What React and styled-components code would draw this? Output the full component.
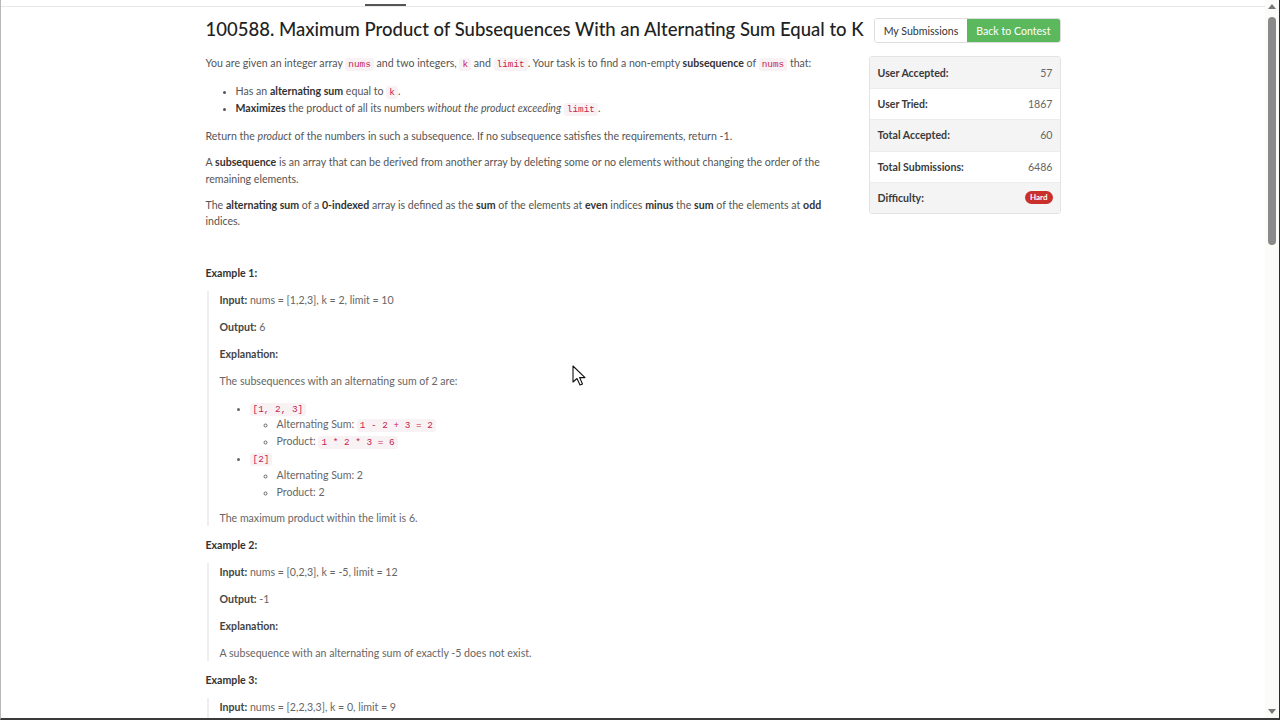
import React from "react";
import styled, { createGlobalStyle } from "styled-components";

const GlobalStyle = createGlobalStyle`
  html, body {
    margin: 0;
    padding: 0;
    background: #fff;
    overflow: hidden;
  }
`;

const font = `"Lato", "Liberation Sans", sans-serif`;
const mono = `"Liberation Mono", "DejaVu Sans Mono", monospace`;

const Frame = styled.div`
  width: 1280px;
  height: 720px;
  box-sizing: border-box;
  display: flex;
  border-left: 1px solid #b8b8b8;
  border-right: 1px solid #2a2a2a;
  border-bottom: 2px solid #3a3a3a;
  font-family: ${font};
  position: relative;
  overflow: hidden;
`;

const Page = styled.div`
  flex: 1;
  display: flex;
  flex-direction: column;
  overflow: hidden;
`;

const Container = styled.div`
  width: 855px;
  margin: 0 auto;
`;

const TopNav = styled.div`
  height: 6px;
  border-bottom: 1px solid #e8e8e8;
`;

const NavTab = styled.div`
  width: 41px;
  height: 4px;
  margin-left: 159px;
  border-bottom: 2px solid #555;
`;

const Main = styled(Container)`
  display: flex;
  justify-content: space-between;
  padding-top: 9px;
`;

const Content = styled.div`
  width: 652px;
  font-size: 10.6px;
  line-height: 16.5px;
  color: #555;

  p {
    margin: 0 0 9.5px;
  }
  b, strong {
    color: #333;
  }
`;

const Title = styled.h1`
  margin: 0 0 13px;
  font-size: 18.5px;
  line-height: 26px;
  font-weight: 500;
  color: #222;
  white-space: nowrap;
`;

const Code = styled.code`
  font-family: ${mono};
  font-size: 9.4px;
  line-height: 1;
  color: #c7254e;
  background: #f9f2f4;
  padding: 1px 3px;
  border-radius: 3px;
`;

const Bullets = styled.ul`
  margin: ${(p) => (p.$nested ? "0" : "11.5px 0")};
  padding-left: ${(p) => p.$indent || 30}px;
  list-style: ${(p) => (p.$circle ? "circle" : "disc")};

  li {
    line-height: 16.8px;
  }
`;

const Spacer = styled.div`
  height: 26px;
`;

const ExampleTitle = styled.p`
  font-weight: 700;
  color: #333;
`;

const ExampleBlock = styled.div`
  border-left: 2px solid #eee;
  padding: 1px 0 0 11px;
  margin: 0 0 10.5px 1px;
  color: #666;

  && p {
    margin-bottom: 10.5px;
  }
  && p:last-child {
    margin-bottom: 0;
  }
  && > ul {
    margin: -0.5px 0 9.5px;
  }
  strong {
    color: #444;
  }
`;

const Sidebar = styled.div`
  width: 192px;
  display: flex;
  flex-direction: column;
  align-items: flex-end;
  padding-top: 2px;
`;

const ButtonGroup = styled.div`
  display: flex;
  border: 1px solid #ddd;
  border-radius: 3px;
  overflow: hidden;
`;

const Button = styled.div`
  height: 23px;
  display: flex;
  align-items: center;
  padding: 0 ${(p) => p.$pad}px;
  font-size: 10.6px;
  color: ${(p) => (p.$primary ? "#fff" : "#333")};
  background: ${(p) => (p.$primary ? "#5cb85c" : "#fff")};
`;

const Stats = styled.div`
  width: 192px;
  margin-top: 13px;
  border: 1px solid #e3e3e3;
  border-radius: 3px;
  box-sizing: border-box;
  overflow: hidden;
`;

const StatRow = styled.div`
  height: 31.2px;
  box-sizing: border-box;
  display: flex;
  align-items: center;
  justify-content: space-between;
  padding: 0 7px 0 8px;
  background: ${(p) => (p.$odd ? "#f4f4f5" : "#fff")};
  border-top: ${(p) => (p.$first ? "none" : "1px solid #ececec")};
  font-size: 10.6px;
`;

const StatLabel = styled.span`
  font-weight: 700;
  color: #3a3a3a;
`;

const StatValue = styled.span`
  color: #666;
`;

const Badge = styled.span`
  background: #c9302c;
  color: #fff;
  font-size: 8px;
  font-weight: 700;
  padding: 1px 5px;
  border-radius: 7px;
  line-height: 11px;
`;

const Scrollbar = styled.div`
  width: 14px;
  background: #fbfbf8;
  display: flex;
  flex-direction: column;
  align-items: center;
  padding-top: 4px;
  box-sizing: border-box;
`;

const Thumb = styled.div`
  width: 8px;
  height: 228px;
  margin-top: 8px;
  border-radius: 4px;
  background: #8a8a8a;
`;

const Arrow = styled.div`
  width: 0;
  height: 0;
  border-left: 4px solid transparent;
  border-right: 4px solid transparent;
  ${(p) => (p.$down ? "border-top: 5px solid #777;" : "border-bottom: 5px solid #777;")}
  margin-top: ${(p) => (p.$down ? "auto" : "0")};
  margin-bottom: ${(p) => (p.$down ? "4px" : "0")};
`;

const Cursor = styled.svg`
  position: absolute;
  left: 571px;
  top: 365px;
`;

const stats = [
  ["User Accepted:", "57"],
  ["User Tried:", "1867"],
  ["Total Accepted:", "60"],
  ["Total Submissions:", "6486"],
];

export default function App() {
  return (
    <>
      <GlobalStyle />
      <Frame>
        <Page>
          <TopNav>
            <Container>
              <NavTab />
            </Container>
          </TopNav>
          <Main>
            <Content>
              <Title>100588. Maximum Product of Subsequences With an Alternating Sum Equal to K</Title>
              <p>
                You are given an integer array <Code>nums</Code> and two integers, <Code>k</Code> and{" "}
                <Code>limit</Code>. Your task is to find a non-empty <strong>subsequence</strong> of{" "}
                <Code>nums</Code> that:
              </p>
              <Bullets>
                <li>
                  Has an <strong>alternating sum</strong> equal to <Code>k</Code>.
                </li>
                <li>
                  <strong>Maximizes</strong> the product of all its numbers{" "}
                  <em>without the product exceeding</em> <Code>limit</Code>.
                </li>
              </Bullets>
              <p>
                Return the <em>product</em> of the numbers in such a subsequence. If no subsequence satisfies the
                requirements, return -1.
              </p>
              <p>
                A <strong>subsequence</strong> is an array that can be derived from another array by deleting some or
                no elements without changing the order of the remaining elements.
              </p>
              <p>
                The <strong>alternating sum</strong> of a <strong>0-indexed</strong> array is defined as the{" "}
                <strong>sum</strong> of the elements at <strong>even</strong> indices <strong>minus</strong> the{" "}
                <strong>sum</strong> of the elements at <strong>odd</strong> indices.
              </p>
              <Spacer />

              <ExampleTitle>Example 1:</ExampleTitle>
              <ExampleBlock>
                <p>
                  <strong>Input:</strong> nums = [1,2,3], k = 2, limit = 10
                </p>
                <p>
                  <strong>Output:</strong> 6
                </p>
                <p>
                  <strong>Explanation:</strong>
                </p>
                <p>The subsequences with an alternating sum of 2 are:</p>
                <Bullets $indent={30}>
                  <li>
                    <Code>[1, 2, 3]</Code>
                    <Bullets $circle $nested $indent={27}>
                      <li>
                        Alternating Sum: <Code>1 - 2 + 3 = 2</Code>
                      </li>
                      <li>
                        Product: <Code>1 * 2 * 3 = 6</Code>
                      </li>
                    </Bullets>
                  </li>
                  <li>
                    <Code>[2]</Code>
                    <Bullets $circle $nested $indent={27}>
                      <li>Alternating Sum: 2</li>
                      <li>Product: 2</li>
                    </Bullets>
                  </li>
                </Bullets>
                <p>The maximum product within the limit is 6.</p>
              </ExampleBlock>

              <ExampleTitle>Example 2:</ExampleTitle>
              <ExampleBlock>
                <p>
                  <strong>Input:</strong> nums = [0,2,3], k = -5, limit = 12
                </p>
                <p>
                  <strong>Output:</strong> -1
                </p>
                <p>
                  <strong>Explanation:</strong>
                </p>
                <p>A subsequence with an alternating sum of exactly -5 does not exist.</p>
              </ExampleBlock>

              <ExampleTitle>Example 3:</ExampleTitle>
              <ExampleBlock>
                <p>
                  <strong>Input:</strong> nums = [2,2,3,3], k = 0, limit = 9
                </p>
                <p>
                  <strong>Output:</strong> 9
                </p>
              </ExampleBlock>
            </Content>

            <Sidebar>
              <ButtonGroup>
                <Button $pad={9}>My Submissions</Button>
                <Button $pad={9} $primary>
                  Back to Contest
                </Button>
              </ButtonGroup>
              <Stats>
                {stats.map(([label, value], i) => (
                  <StatRow key={label} $odd={i % 2 === 0} $first={i === 0}>
                    <StatLabel>{label}</StatLabel>
                    <StatValue>{value}</StatValue>
                  </StatRow>
                ))}
                <StatRow $odd>
                  <StatLabel>Difficulty:</StatLabel>
                  <Badge>Hard</Badge>
                </StatRow>
              </Stats>
            </Sidebar>
          </Main>
        </Page>
        <Scrollbar>
          <Arrow />
          <Thumb />
          <Arrow $down />
        </Scrollbar>
        <Cursor width="16" height="22" viewBox="0 0 16 22">
          <path d="M1 1 L1 17 L5 13.5 L8 20 L10.5 19 L7.6 12.6 L13 12.6 Z" fill="#fff" stroke="#111" strokeWidth="1.1" strokeLinejoin="round" />
        </Cursor>
      </Frame>
    </>
  );
}
